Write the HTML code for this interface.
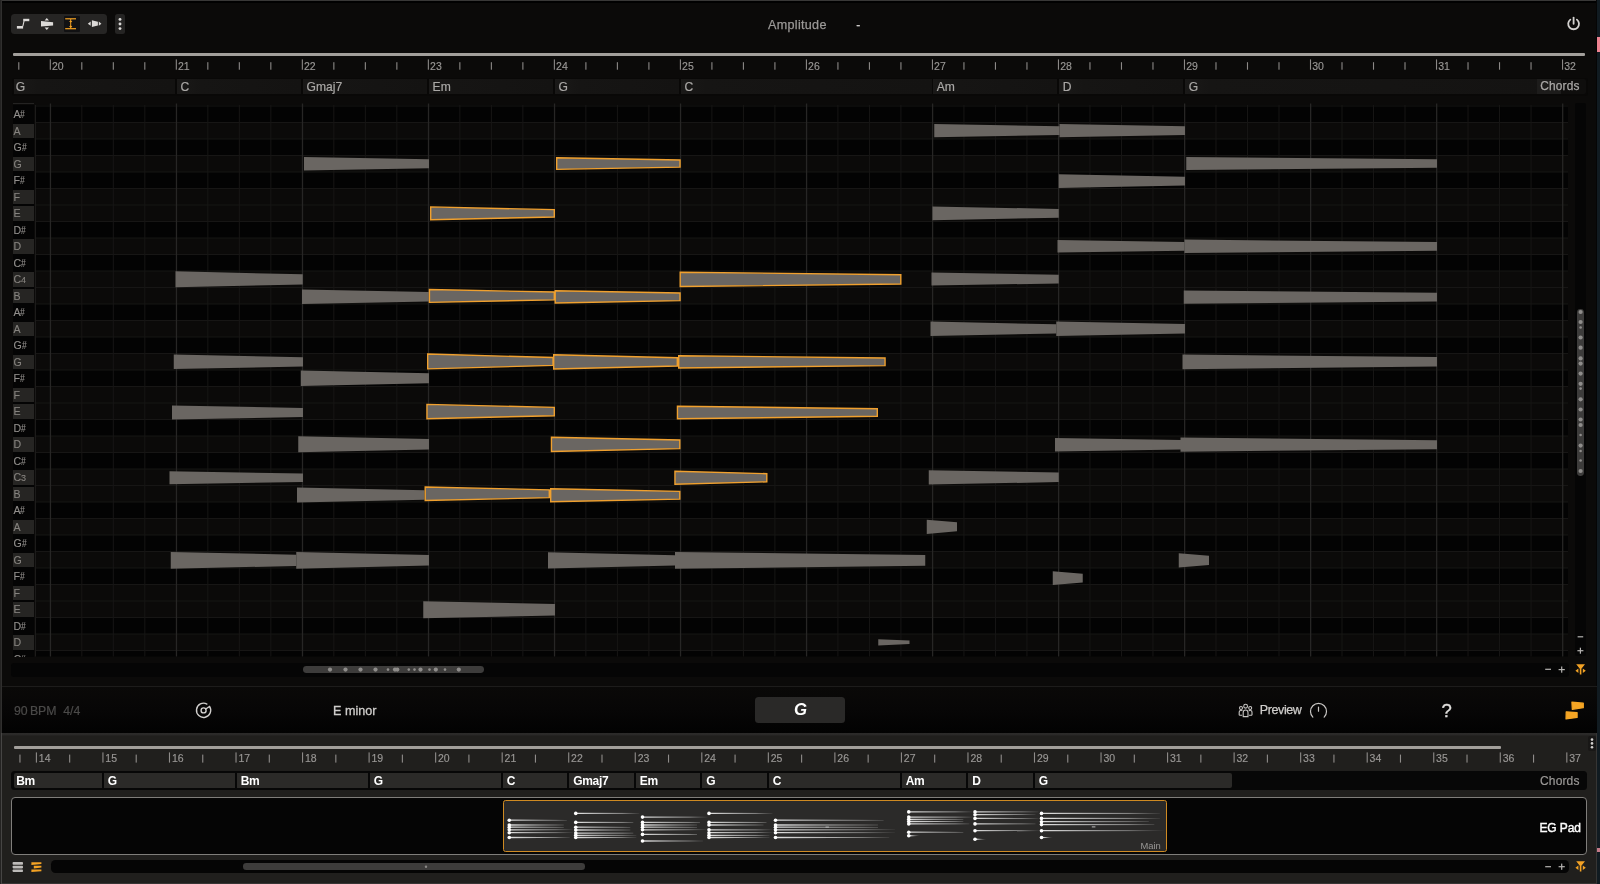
<!DOCTYPE html>
<html lang="en"><head><meta charset="utf-8"><title>Piano roll</title>
<style>
html,body{margin:0;padding:0;background:#0b0a09;}
body{width:1600px;height:884px;overflow:hidden;position:relative;font-family:"Liberation Sans",sans-serif;color:#aaa;-webkit-font-smoothing:antialiased;}
.a{position:absolute;}
.t{position:absolute;white-space:nowrap;line-height:1;}
.key{position:absolute;left:12.5px;width:21px;height:14.5px;background:#262523;}
.kl{position:absolute;left:13.5px;font-size:10.6px;line-height:1;color:#86837f;white-space:nowrap;letter-spacing:-0.2px;-webkit-text-stroke:0.12px;}
.kl i{font-style:normal;display:inline-block;transform:scaleX(.8);transform-origin:0 50%;}
.kl b{font-weight:normal;font-size:9px;}
.rl{position:absolute;font-size:10.5px;line-height:1;color:#999795;white-space:nowrap;-webkit-text-stroke:0.15px #999795;}
.cl{position:absolute;font-size:12.1px;line-height:1;color:#aaa8a6;white-space:nowrap;top:81px;-webkit-text-stroke:0.2px #aaa8a6;}
.bcl{position:absolute;font-size:12px;line-height:1;color:#fff;white-space:nowrap;top:775px;font-weight:bold;letter-spacing:-0.3px;}
svg{position:absolute;left:0;top:0;overflow:visible;}
</style></head><body><div id="root" style="position:absolute;left:0;top:0;width:1600px;height:884px;will-change:transform">

<div class="a" style="left:0;top:0;width:1597px;height:2.7px;background:#010101"></div><div class="a" style="left:0;top:0;width:1597px;height:1.3px;background:#393837"></div>
<div class="a" style="left:0;top:0;width:1.2px;height:884px;background:#242322"></div><div class="a" style="left:1.2px;top:0;width:1px;height:733px;background:#302f2e"></div><div class="a" style="left:1.2px;top:733px;width:1px;height:151px;background:#464544;z-index:3"></div>
<div class="a" style="left:1596.5px;top:0;width:3.5px;height:884px;background:#111b21"></div>
<div class="a" style="left:1597px;top:37px;width:3px;height:15px;background:#ee8391"></div>
<div class="a" style="left:1596px;top:0;width:1px;height:884px;background:#050505"></div>
<div class="a" style="left:11px;top:14px;width:95.5px;height:20px;background:#262524;border-radius:3.5px"></div>
<div class="a" style="left:63.8px;top:15.8px;width:16.2px;height:16px;background:#111113;border-radius:1px"></div>
<div class="a" style="left:115px;top:14px;width:10px;height:20px;background:#252423;border-radius:2.5px"></div>
<svg width="140" height="40" viewBox="0 0 140 40">
<g fill="#dcdad8" stroke="none">
<!-- step icon -->
<rect x="16.9" y="26" width="6.2" height="2.6"/><rect x="23.2" y="18.8" width="6.1" height="2.4"/><path d="M22.3 26.2l1.2-5.2h1.1l-1.2 5.2z"/>
<!-- vertical resize blob -->
<path d="M41 20.9L53.1 22.2V25.4L41 26.4z"/>
<path d="M46.8 17.9l2.2 2.6h-4.4zM46.8 30.1l2.2-2.6h-4.4z"/>
<!-- horizontal resize blob -->
<path d="M91.9 20.3L97.9 21.8V25.5L91.9 27.1z"/>
<path d="M87.8 23.7l2.9-2.1v4.2zM101.4 23.7l-2.6-2.1v4.2z"/>

<!-- dots -->
<circle cx="120" cy="19.4" r="1.45"/><circle cx="120" cy="24" r="1.45"/><circle cx="120" cy="28.6" r="1.45"/>
</g>
<g fill="#f3a224" stroke="none">
<rect x="65.2" y="18.2" width="10.8" height="1.2"/>
<rect x="65.2" y="28.1" width="10.8" height="1.2"/>
<rect x="70.2" y="19" width="1" height="9.5"/>
<path d="M70.7 20.4l1.6 1.1-1.6 1.100-1.600-1.100zM70.700 25.500l1.600 1.100-1.600 1.100-1.600-1.100z"/>
</g>
</svg>
<div class="t" id="amp" style="left:768px;top:19.1px;font-size:12.6px;color:#9b9997;letter-spacing:0.3px;-webkit-text-stroke:0.25px #9b9997">Amplitude</div>
<div class="t" id="dash" style="left:856.2px;top:18.8px;font-size:12px;color:#d8d6d4;-webkit-text-stroke:0.2px #d8d6d4">-</div>
<svg width="1600" height="50" viewBox="0 0 1600 50"><g fill="none" stroke="#d2d0ce" stroke-width="1.8" stroke-linecap="round">
<path d="M1570.3 19.6a5.4 5.4 0 1 0 6.6 0"/><path d="M1573.6 17.6v6.2"/></g></svg>
<div class="a" style="left:13.3px;top:53.4px;width:1572px;height:2.9px;background:#a29f9b;border-radius:1px"></div>
<svg width="1600" height="80" viewBox="0 0 1600 80"><g fill="#8c8987"><rect x="18.24" y="62.2" width="1.1" height="7.5"/><rect x="49.75" y="59.4" width="1.1" height="10.3"/><rect x="81.25" y="62.2" width="1.1" height="7.5"/><rect x="112.76" y="62.2" width="1.1" height="7.5"/><rect x="144.26" y="62.2" width="1.1" height="7.5"/><rect x="175.77" y="59.4" width="1.1" height="10.3"/><rect x="207.27" y="62.2" width="1.1" height="7.5"/><rect x="238.78" y="62.2" width="1.1" height="7.5"/><rect x="270.28" y="62.2" width="1.1" height="7.5"/><rect x="301.79" y="59.4" width="1.1" height="10.3"/><rect x="333.30" y="62.2" width="1.1" height="7.5"/><rect x="364.80" y="62.2" width="1.1" height="7.5"/><rect x="396.31" y="62.2" width="1.1" height="7.5"/><rect x="427.81" y="59.4" width="1.1" height="10.3"/><rect x="459.31" y="62.2" width="1.1" height="7.5"/><rect x="490.82" y="62.2" width="1.1" height="7.5"/><rect x="522.33" y="62.2" width="1.1" height="7.5"/><rect x="553.83" y="59.4" width="1.1" height="10.3"/><rect x="585.34" y="62.2" width="1.1" height="7.5"/><rect x="616.84" y="62.2" width="1.1" height="7.5"/><rect x="648.35" y="62.2" width="1.1" height="7.5"/><rect x="679.85" y="59.4" width="1.1" height="10.3"/><rect x="711.36" y="62.2" width="1.1" height="7.5"/><rect x="742.86" y="62.2" width="1.1" height="7.5"/><rect x="774.37" y="62.2" width="1.1" height="7.5"/><rect x="805.87" y="59.4" width="1.1" height="10.3"/><rect x="837.38" y="62.2" width="1.1" height="7.5"/><rect x="868.88" y="62.2" width="1.1" height="7.5"/><rect x="900.38" y="62.2" width="1.1" height="7.5"/><rect x="931.89" y="59.4" width="1.1" height="10.3"/><rect x="963.39" y="62.2" width="1.1" height="7.5"/><rect x="994.90" y="62.2" width="1.1" height="7.5"/><rect x="1026.40" y="62.2" width="1.1" height="7.5"/><rect x="1057.91" y="59.4" width="1.1" height="10.3"/><rect x="1089.41" y="62.2" width="1.1" height="7.5"/><rect x="1120.92" y="62.2" width="1.1" height="7.5"/><rect x="1152.42" y="62.2" width="1.1" height="7.5"/><rect x="1183.93" y="59.4" width="1.1" height="10.3"/><rect x="1215.43" y="62.2" width="1.1" height="7.5"/><rect x="1246.94" y="62.2" width="1.1" height="7.5"/><rect x="1278.44" y="62.2" width="1.1" height="7.5"/><rect x="1309.95" y="59.4" width="1.1" height="10.3"/><rect x="1341.45" y="62.2" width="1.1" height="7.5"/><rect x="1372.96" y="62.2" width="1.1" height="7.5"/><rect x="1404.46" y="62.2" width="1.1" height="7.5"/><rect x="1435.97" y="59.4" width="1.1" height="10.3"/><rect x="1467.47" y="62.2" width="1.1" height="7.5"/><rect x="1498.98" y="62.2" width="1.1" height="7.5"/><rect x="1530.48" y="62.2" width="1.1" height="7.5"/><rect x="1561.99" y="59.4" width="1.1" height="10.3"/></g></svg>
<div class="rl" style="left:52.0px;top:60.6px">20</div>
<div class="rl" style="left:178.0px;top:60.6px">21</div>
<div class="rl" style="left:304.0px;top:60.6px">22</div>
<div class="rl" style="left:430.1px;top:60.6px">23</div>
<div class="rl" style="left:556.1px;top:60.6px">24</div>
<div class="rl" style="left:682.1px;top:60.6px">25</div>
<div class="rl" style="left:808.1px;top:60.6px">26</div>
<div class="rl" style="left:934.1px;top:60.6px">27</div>
<div class="rl" style="left:1060.2px;top:60.6px">28</div>
<div class="rl" style="left:1186.2px;top:60.6px">29</div>
<div class="rl" style="left:1312.2px;top:60.6px">30</div>
<div class="rl" style="left:1438.2px;top:60.6px">31</div>
<div class="rl" style="left:1564.2px;top:60.6px">32</div>
<div class="a" style="left:11.5px;top:77.5px;width:1576px;height:18px;background:#090807;border-radius:3px"></div>
<div class="a" style="left:13.9px;top:79px;width:161.4px;height:15px;background:linear-gradient(90deg,#1a1918 0,#161514 24px,#141312 100%)"></div>
<div class="cl" style="left:15.7px">G</div>
<div class="a" style="left:176.9px;top:79px;width:124.5px;height:15px;background:linear-gradient(90deg,#1a1918 0,#161514 24px,#141312 100%)"></div>
<div class="cl" style="left:180.5px">C</div>
<div class="a" style="left:303.0px;top:79px;width:124.4px;height:15px;background:linear-gradient(90deg,#1a1918 0,#161514 24px,#141312 100%)"></div>
<div class="cl" style="left:306.6px">Gmaj7</div>
<div class="a" style="left:429.0px;top:79px;width:124.4px;height:15px;background:linear-gradient(90deg,#1a1918 0,#161514 24px,#141312 100%)"></div>
<div class="cl" style="left:432.6px">Em</div>
<div class="a" style="left:555.0px;top:79px;width:124.4px;height:15px;background:linear-gradient(90deg,#1a1918 0,#161514 24px,#141312 100%)"></div>
<div class="cl" style="left:558.6px">G</div>
<div class="a" style="left:681.0px;top:79px;width:250.5px;height:15px;background:linear-gradient(90deg,#1a1918 0,#161514 24px,#141312 100%)"></div>
<div class="cl" style="left:684.6px">C</div>
<div class="a" style="left:933.1px;top:79px;width:124.4px;height:15px;background:linear-gradient(90deg,#1a1918 0,#161514 24px,#141312 100%)"></div>
<div class="cl" style="left:936.7px">Am</div>
<div class="a" style="left:1059.1px;top:79px;width:124.4px;height:15px;background:linear-gradient(90deg,#1a1918 0,#161514 24px,#141312 100%)"></div>
<div class="cl" style="left:1062.7px">D</div>
<div class="a" style="left:1185.1px;top:79px;width:375.9px;height:15px;background:linear-gradient(90deg,#1a1918 0,#161514 24px,#141312 100%)"></div>
<div class="cl" style="left:1188.7px">G</div>
<div class="a" style="left:1537px;top:79px;width:49px;height:15px;background:#0f0e0d;border-radius:2px"></div>
<div class="a" style="left:1537px;top:79px;width:24px;height:15px;background:#1d1c1b"></div>
<div class="t" id="chT" style="left:1540.3px;top:81.1px;font-size:11.9px;color:#a9a7a5;letter-spacing:0.15px;-webkit-text-stroke:0.25px #a9a7a5">Chords</div>
<div class="a" style="left:12.5px;top:103px;width:21px;height:1.2px;background:#242322"></div>
<div class="a" id="keys" style="left:0;top:0;width:36px;height:657px;overflow:hidden">
<div class="a" style="left:12.5px;top:105px;width:21px;height:552px;background:#040404"></div>
<div class="kl" style="top:109.20px;color:#93908d">A<i>#</i></div>
<div class="key" style="top:123.50px"></div>
<div class="kl" style="top:125.70px;color:#86837f">A</div>
<div class="kl" style="top:142.20px;color:#93908d">G<i>#</i></div>
<div class="key" style="top:156.50px"></div>
<div class="kl" style="top:158.70px;color:#86837f">G</div>
<div class="kl" style="top:175.20px;color:#93908d">F<i>#</i></div>
<div class="key" style="top:189.50px"></div>
<div class="kl" style="top:191.70px;color:#86837f">F</div>
<div class="key" style="top:206.00px"></div>
<div class="kl" style="top:208.20px;color:#86837f">E</div>
<div class="kl" style="top:224.70px;color:#93908d">D<i>#</i></div>
<div class="key" style="top:239.00px"></div>
<div class="kl" style="top:241.20px;color:#86837f">D</div>
<div class="kl" style="top:257.70px;color:#93908d">C<i>#</i></div>
<div class="key" style="top:272.00px"></div>
<div class="kl" style="top:274.20px;color:#86837f">C<b>4</b></div>
<div class="key" style="top:288.50px"></div>
<div class="kl" style="top:290.70px;color:#86837f">B</div>
<div class="kl" style="top:307.20px;color:#93908d">A<i>#</i></div>
<div class="key" style="top:321.50px"></div>
<div class="kl" style="top:323.70px;color:#86837f">A</div>
<div class="kl" style="top:340.20px;color:#93908d">G<i>#</i></div>
<div class="key" style="top:354.50px"></div>
<div class="kl" style="top:356.70px;color:#86837f">G</div>
<div class="kl" style="top:373.20px;color:#93908d">F<i>#</i></div>
<div class="key" style="top:387.50px"></div>
<div class="kl" style="top:389.70px;color:#86837f">F</div>
<div class="key" style="top:404.00px"></div>
<div class="kl" style="top:406.20px;color:#86837f">E</div>
<div class="kl" style="top:422.70px;color:#93908d">D<i>#</i></div>
<div class="key" style="top:437.00px"></div>
<div class="kl" style="top:439.20px;color:#86837f">D</div>
<div class="kl" style="top:455.70px;color:#93908d">C<i>#</i></div>
<div class="key" style="top:470.00px"></div>
<div class="kl" style="top:472.20px;color:#86837f">C<b>3</b></div>
<div class="key" style="top:486.50px"></div>
<div class="kl" style="top:488.70px;color:#86837f">B</div>
<div class="kl" style="top:505.20px;color:#93908d">A<i>#</i></div>
<div class="key" style="top:519.50px"></div>
<div class="kl" style="top:521.70px;color:#86837f">A</div>
<div class="kl" style="top:538.20px;color:#93908d">G<i>#</i></div>
<div class="key" style="top:552.50px"></div>
<div class="kl" style="top:554.70px;color:#86837f">G</div>
<div class="kl" style="top:571.20px;color:#93908d">F<i>#</i></div>
<div class="key" style="top:585.50px"></div>
<div class="kl" style="top:587.70px;color:#86837f">F</div>
<div class="key" style="top:602.00px"></div>
<div class="kl" style="top:604.20px;color:#86837f">E</div>
<div class="kl" style="top:620.70px;color:#93908d">D<i>#</i></div>
<div class="key" style="top:635.00px"></div>
<div class="kl" style="top:637.20px;color:#86837f">D</div>
<div class="kl" style="top:653.70px;color:#93908d">C<i>#</i></div>
</div>
<svg width="1600" height="884" viewBox="0 0 1600 884" shape-rendering="auto"><rect x="35.5" y="105.0" width="1532.5" height="551.5" fill="#030303"/><rect x="35.5" y="122.50" width="1532.5" height="16.50" fill="#0b0a09"/><rect x="35.5" y="155.50" width="1532.5" height="16.50" fill="#0b0a09"/><rect x="35.5" y="188.50" width="1532.5" height="16.50" fill="#0b0a09"/><rect x="35.5" y="205.00" width="1532.5" height="16.50" fill="#0b0a09"/><rect x="35.5" y="238.00" width="1532.5" height="16.50" fill="#0b0a09"/><rect x="35.5" y="271.00" width="1532.5" height="16.50" fill="#0b0a09"/><rect x="35.5" y="287.50" width="1532.5" height="16.50" fill="#0b0a09"/><rect x="35.5" y="320.50" width="1532.5" height="16.50" fill="#0b0a09"/><rect x="35.5" y="353.50" width="1532.5" height="16.50" fill="#0b0a09"/><rect x="35.5" y="386.50" width="1532.5" height="16.50" fill="#0b0a09"/><rect x="35.5" y="403.00" width="1532.5" height="16.50" fill="#0b0a09"/><rect x="35.5" y="436.00" width="1532.5" height="16.50" fill="#0b0a09"/><rect x="35.5" y="469.00" width="1532.5" height="16.50" fill="#0b0a09"/><rect x="35.5" y="485.50" width="1532.5" height="16.50" fill="#0b0a09"/><rect x="35.5" y="518.50" width="1532.5" height="16.50" fill="#0b0a09"/><rect x="35.5" y="551.50" width="1532.5" height="16.50" fill="#0b0a09"/><rect x="35.5" y="584.50" width="1532.5" height="16.50" fill="#0b0a09"/><rect x="35.5" y="601.00" width="1532.5" height="16.50" fill="#0b0a09"/><rect x="35.5" y="634.00" width="1532.5" height="16.50" fill="#0b0a09"/><rect x="35.5" y="105.50" width="1532.5" height="1" fill="#171615"/><rect x="35.5" y="122.00" width="1532.5" height="1" fill="#171615"/><rect x="35.5" y="138.50" width="1532.5" height="1" fill="#171615"/><rect x="35.5" y="155.00" width="1532.5" height="1" fill="#171615"/><rect x="35.5" y="171.50" width="1532.5" height="1" fill="#171615"/><rect x="35.5" y="188.00" width="1532.5" height="1" fill="#171615"/><rect x="35.5" y="204.50" width="1532.5" height="1" fill="#171615"/><rect x="35.5" y="221.00" width="1532.5" height="1" fill="#171615"/><rect x="35.5" y="237.50" width="1532.5" height="1" fill="#171615"/><rect x="35.5" y="254.00" width="1532.5" height="1" fill="#171615"/><rect x="35.5" y="270.50" width="1532.5" height="1" fill="#171615"/><rect x="35.5" y="287.00" width="1532.5" height="1" fill="#171615"/><rect x="35.5" y="303.50" width="1532.5" height="1" fill="#171615"/><rect x="35.5" y="320.00" width="1532.5" height="1" fill="#171615"/><rect x="35.5" y="336.50" width="1532.5" height="1" fill="#171615"/><rect x="35.5" y="353.00" width="1532.5" height="1" fill="#171615"/><rect x="35.5" y="369.50" width="1532.5" height="1" fill="#171615"/><rect x="35.5" y="386.00" width="1532.5" height="1" fill="#171615"/><rect x="35.5" y="402.50" width="1532.5" height="1" fill="#171615"/><rect x="35.5" y="419.00" width="1532.5" height="1" fill="#171615"/><rect x="35.5" y="435.50" width="1532.5" height="1" fill="#171615"/><rect x="35.5" y="452.00" width="1532.5" height="1" fill="#171615"/><rect x="35.5" y="468.50" width="1532.5" height="1" fill="#171615"/><rect x="35.5" y="485.00" width="1532.5" height="1" fill="#171615"/><rect x="35.5" y="501.50" width="1532.5" height="1" fill="#171615"/><rect x="35.5" y="518.00" width="1532.5" height="1" fill="#171615"/><rect x="35.5" y="534.50" width="1532.5" height="1" fill="#171615"/><rect x="35.5" y="551.00" width="1532.5" height="1" fill="#171615"/><rect x="35.5" y="567.50" width="1532.5" height="1" fill="#171615"/><rect x="35.5" y="584.00" width="1532.5" height="1" fill="#171615"/><rect x="35.5" y="600.50" width="1532.5" height="1" fill="#171615"/><rect x="35.5" y="617.00" width="1532.5" height="1" fill="#171615"/><rect x="35.5" y="633.50" width="1532.5" height="1" fill="#171615"/><rect x="35.5" y="650.00" width="1532.5" height="1" fill="#171615"/><rect x="49.80" y="103.5" width="1.3" height="553.0" fill="#272625"/><rect x="81.30" y="105.0" width="1" height="551.5" fill="#171615"/><rect x="112.81" y="105.0" width="1" height="551.5" fill="#171615"/><rect x="144.31" y="105.0" width="1" height="551.5" fill="#171615"/><rect x="175.82" y="103.5" width="1.3" height="553.0" fill="#272625"/><rect x="207.32" y="105.0" width="1" height="551.5" fill="#171615"/><rect x="238.83" y="105.0" width="1" height="551.5" fill="#171615"/><rect x="270.33" y="105.0" width="1" height="551.5" fill="#171615"/><rect x="301.84" y="103.5" width="1.3" height="553.0" fill="#272625"/><rect x="333.35" y="105.0" width="1" height="551.5" fill="#171615"/><rect x="364.85" y="105.0" width="1" height="551.5" fill="#171615"/><rect x="396.36" y="105.0" width="1" height="551.5" fill="#171615"/><rect x="427.86" y="103.5" width="1.3" height="553.0" fill="#272625"/><rect x="459.37" y="105.0" width="1" height="551.5" fill="#171615"/><rect x="490.87" y="105.0" width="1" height="551.5" fill="#171615"/><rect x="522.38" y="105.0" width="1" height="551.5" fill="#171615"/><rect x="553.88" y="103.5" width="1.3" height="553.0" fill="#272625"/><rect x="585.38" y="105.0" width="1" height="551.5" fill="#171615"/><rect x="616.89" y="105.0" width="1" height="551.5" fill="#171615"/><rect x="648.39" y="105.0" width="1" height="551.5" fill="#171615"/><rect x="679.90" y="103.5" width="1.3" height="553.0" fill="#272625"/><rect x="711.40" y="105.0" width="1" height="551.5" fill="#171615"/><rect x="742.91" y="105.0" width="1" height="551.5" fill="#171615"/><rect x="774.41" y="105.0" width="1" height="551.5" fill="#171615"/><rect x="805.92" y="103.5" width="1.3" height="553.0" fill="#272625"/><rect x="837.42" y="105.0" width="1" height="551.5" fill="#171615"/><rect x="868.93" y="105.0" width="1" height="551.5" fill="#171615"/><rect x="900.43" y="105.0" width="1" height="551.5" fill="#171615"/><rect x="931.94" y="103.5" width="1.3" height="553.0" fill="#272625"/><rect x="963.44" y="105.0" width="1" height="551.5" fill="#171615"/><rect x="994.95" y="105.0" width="1" height="551.5" fill="#171615"/><rect x="1026.45" y="105.0" width="1" height="551.5" fill="#171615"/><rect x="1057.96" y="103.5" width="1.3" height="553.0" fill="#272625"/><rect x="1089.46" y="105.0" width="1" height="551.5" fill="#171615"/><rect x="1120.97" y="105.0" width="1" height="551.5" fill="#171615"/><rect x="1152.47" y="105.0" width="1" height="551.5" fill="#171615"/><rect x="1183.98" y="103.5" width="1.3" height="553.0" fill="#272625"/><rect x="1215.48" y="105.0" width="1" height="551.5" fill="#171615"/><rect x="1246.99" y="105.0" width="1" height="551.5" fill="#171615"/><rect x="1278.49" y="105.0" width="1" height="551.5" fill="#171615"/><rect x="1310.00" y="103.5" width="1.3" height="553.0" fill="#272625"/><rect x="1341.50" y="105.0" width="1" height="551.5" fill="#171615"/><rect x="1373.01" y="105.0" width="1" height="551.5" fill="#171615"/><rect x="1404.51" y="105.0" width="1" height="551.5" fill="#171615"/><rect x="1436.02" y="103.5" width="1.3" height="553.0" fill="#272625"/><rect x="1467.52" y="105.0" width="1" height="551.5" fill="#171615"/><rect x="1499.03" y="105.0" width="1" height="551.5" fill="#171615"/><rect x="1530.53" y="105.0" width="1" height="551.5" fill="#171615"/><rect x="1562.04" y="103.5" width="1.3" height="553.0" fill="#272625"/><rect x="35.0" y="105.0" width="1" height="551.5" fill="#1c1b1a"/></svg>
<svg width="1600" height="884" viewBox="0 0 1600 884"><g fill="#6a6662"><path d="M934.25 123.92L1059.50 126.17L1059.50 134.92L934.25 137.17Z"/><path d="M1059.50 123.92L1185.00 126.17L1185.00 134.92L1059.50 137.17Z"/><path d="M304.00 157.10L429.00 159.35L429.00 168.35L304.00 170.60Z"/><path d="M1186.25 157.05L1437.00 159.30L1437.00 167.80L1186.25 170.05Z"/><path d="M1058.75 174.22L1185.00 176.72L1185.00 185.47L1058.75 187.97Z"/><path d="M932.50 206.47L1058.75 208.97L1058.75 217.72L932.50 220.22Z"/><path d="M1057.50 240.10L1184.50 241.97L1184.50 250.72L1057.50 252.60Z"/><path d="M1184.50 239.60L1437.00 241.97L1437.00 250.72L1184.50 253.10Z"/><path d="M175.50 271.35L302.75 274.23L302.75 284.48L175.50 287.35Z"/><path d="M931.50 272.55L1058.75 274.68L1058.75 283.43L931.50 285.55Z"/><path d="M302.00 289.50L428.75 292.12L428.75 301.38L302.00 304.00Z"/><path d="M1183.75 290.53L1437.00 292.78L1437.00 301.53L1183.75 303.78Z"/><path d="M930.50 321.60L1056.25 324.23L1056.25 333.48L930.50 336.10Z"/><path d="M1056.25 321.60L1185.00 324.10L1185.00 333.60L1056.25 336.10Z"/><path d="M173.75 354.60L303.00 357.23L303.00 366.48L173.75 369.10Z"/><path d="M1182.50 354.48L1437.00 357.10L1437.00 366.60L1182.50 369.23Z"/><path d="M300.75 370.60L429.00 373.35L429.00 383.35L300.75 386.10Z"/><path d="M172.00 405.50L303.00 408.00L303.00 417.00L172.00 419.50Z"/><path d="M298.25 436.35L429.00 439.10L429.00 449.60L298.25 452.35Z"/><path d="M1055.00 438.00L1181.25 440.00L1181.25 449.50L1055.00 451.50Z"/><path d="M1180.50 437.53L1437.00 440.15L1437.00 449.15L1180.50 451.78Z"/><path d="M169.50 471.25L303.00 473.62L303.00 481.88L169.50 484.25Z"/><path d="M928.75 470.23L1058.75 472.60L1058.75 482.10L928.75 484.48Z"/><path d="M297.00 487.50L424.50 490.25L424.50 499.75L297.00 502.50Z"/><path d="M926.75 519.73L957.00 522.35L957.00 531.35L926.75 533.98Z"/><path d="M170.75 551.98L296.25 554.73L296.25 565.98L170.75 568.73Z"/><path d="M296.25 551.98L429.00 555.10L429.00 565.60L296.25 568.73Z"/><path d="M548.00 552.23L675.00 555.23L675.00 565.48L548.00 568.48Z"/><path d="M675.00 551.98L925.25 554.98L925.25 565.73L675.00 568.73Z"/><path d="M1178.75 553.23L1209.00 555.73L1209.00 564.98L1178.75 567.48Z"/><path d="M1052.75 571.23L1082.75 573.73L1082.75 582.48L1052.75 584.98Z"/><path d="M423.25 601.25L555.00 604.00L555.00 615.50L423.25 618.25Z"/><path d="M878.25 639.23L909.50 640.60L909.50 644.10L878.25 645.48Z"/></g><g fill="#6a6662" stroke="#f0a02e" stroke-width="1.4" stroke-linejoin="miter"><path d="M556.70 157.75L680.05 160.00L680.05 167.10L556.70 169.35Z"/><path d="M430.70 206.92L554.30 209.67L554.30 217.03L430.70 219.78Z"/><path d="M680.20 272.18L900.80 274.68L900.80 284.03L680.20 286.53Z"/><path d="M429.45 289.53L554.30 292.03L554.30 299.88L429.45 302.38Z"/><path d="M555.20 290.68L680.05 293.05L680.05 300.65L555.20 303.03Z"/><path d="M427.70 354.03L553.05 357.53L553.05 365.38L427.70 368.88Z"/><path d="M553.70 354.68L677.30 357.68L677.30 366.03L553.70 369.03Z"/><path d="M678.70 355.68L885.05 358.05L885.05 365.65L678.70 368.03Z"/><path d="M426.95 404.38L554.30 407.38L554.30 415.73L426.95 418.73Z"/><path d="M677.45 406.20L877.30 408.70L877.30 416.30L677.45 418.80Z"/><path d="M551.45 437.18L679.80 440.05L679.80 448.65L551.45 451.53Z"/><path d="M674.95 471.20L766.80 473.70L766.80 481.80L674.95 484.30Z"/><path d="M425.20 486.95L549.30 489.82L549.30 497.68L425.20 500.55Z"/><path d="M550.70 488.70L679.80 491.32L679.80 499.18L550.70 501.80Z"/></g></svg>
<div class="a" style="left:1574.5px;top:103px;width:11.5px;height:553px;background:#050505;border-radius:2px"></div>
<div class="a" style="left:1577.3px;top:308.5px;width:6.7px;height:167px;background:#3d3c3b;border-radius:3.4px"></div>
<svg width="1600" height="884" viewBox="0 0 1600 884"><g fill="#8f8d8b"><circle cx="1580.6" cy="312.0" r="2.1"/><circle cx="1580.6" cy="322.0" r="2.1"/><circle cx="1580.6" cy="327.5" r="1.3"/><circle cx="1580.6" cy="337.5" r="2.1"/><circle cx="1580.6" cy="347.7" r="2.1"/><circle cx="1580.6" cy="358.4" r="2.1"/><circle cx="1580.6" cy="363.6" r="2.1"/><circle cx="1580.6" cy="373.6" r="2.1"/><circle cx="1580.6" cy="383.8" r="2.1"/><circle cx="1580.6" cy="388.6" r="1.3"/><circle cx="1580.6" cy="399.3" r="2.1"/><circle cx="1580.6" cy="409.5" r="2.1"/><circle cx="1580.6" cy="419.5" r="2.1"/><circle cx="1580.6" cy="425.0" r="2.1"/><circle cx="1580.6" cy="435.0" r="1.3"/><circle cx="1580.6" cy="445.6" r="2.1"/><circle cx="1580.6" cy="451.0" r="1.3"/><circle cx="1580.6" cy="460.5" r="1.3"/><circle cx="1580.6" cy="471.0" r="2.1"/></g></svg>
<div class="a" style="left:10.5px;top:662.5px;width:1558px;height:14px;background:#050505;border-radius:3px"></div>
<svg width="1600" height="884" viewBox="0 0 1600 884"><g fill="#b5b3b1"><rect x="1577.6" y="636.2" width="5.6" height="1.2"/><rect x="1577.4" y="650.1" width="6" height="1.2"/><rect x="1579.8" y="647.7" width="1.2" height="6"/><rect x="1545.2" y="668.7" width="5.8" height="1.2"/><rect x="1558.6" y="669" width="6.2" height="1.2"/><rect x="1561.1" y="666.5" width="1.2" height="6.2"/></g><g fill="#f3a224"><path d="M1576.2 664.2h8.8l-3.6 4.6v5.6h-1.6v-5.6z"/><path d="M1575.4 670.8l3-2.3v4.6zM1585.8 670.8l-3-2.3v4.6z"/></g></svg>
<div class="a" style="left:303px;top:666.2px;width:181px;height:6.8px;background:#3d3c3b;border-radius:3.4px"></div>
<svg width="1600" height="884" viewBox="0 0 1600 884"><g fill="#8f8d8b"><circle cx="330.0" cy="669.6" r="2.1"/><circle cx="345.5" cy="669.6" r="2.1"/><circle cx="360.5" cy="669.6" r="2.1"/><circle cx="375.5" cy="669.6" r="2.1"/><circle cx="388.0" cy="669.6" r="1.3"/><circle cx="395.0" cy="669.6" r="2.1"/><circle cx="397.3" cy="669.6" r="2.1"/><circle cx="408.8" cy="669.6" r="1.3"/><circle cx="414.5" cy="669.6" r="1.3"/><circle cx="420.5" cy="669.6" r="2.1"/><circle cx="429.5" cy="669.6" r="1.3"/><circle cx="435.8" cy="669.6" r="2.1"/><circle cx="445.0" cy="669.6" r="1.3"/><circle cx="458.8" cy="669.6" r="2.1"/></g></svg>
<div class="a" style="left:2px;top:686px;width:1594.5px;height:47px;background:linear-gradient(180deg,#0a0908 0,#070606 50%,#020202 100%)"></div>
<div class="a" style="left:2px;top:686px;width:1594.5px;height:1px;background:#1d1c1b"></div>
<div class="t" id="bpm" style="left:14px;top:704.6px;font-size:12.3px;color:#4b4a49;word-spacing:-1.2px;-webkit-text-stroke:0.2px #4b4a49"><span id="bpm1">90 BPM</span><span id="bpm2" style="margin-left:6.6px">4/4</span></div>
<svg width="1600" height="884" viewBox="0 0 1600 884"><g fill="none" stroke="#d2d0ce" stroke-width="1.4" stroke-linecap="round">
<path d="M206.93 704.03A7.1 7.1 0 1 0 209.55 706.43L205.7 709"/><circle cx="203.6" cy="710.4" r="2.5"/></g></svg>
<div class="t" id="emin" style="left:333px;top:705.2px;font-size:12.6px;color:#cfcdcb;letter-spacing:0px;-webkit-text-stroke:0.3px #cfcdcb">E minor</div>
<div class="a" style="left:754.7px;top:697.2px;width:90.6px;height:26.3px;background:#2a2928;border-radius:3.5px"></div>
<div class="t" id="gbtn" style="left:794px;top:702.3px;font-size:16.800px;color:#fff;font-style:italic;font-weight:bold">G</div>
<svg width="1600" height="884" viewBox="0 0 1600 884"><g fill="none" stroke="#c8c6c4" stroke-width="1.1">
<circle cx="1245.6" cy="706.2" r="1.9"/><circle cx="1241" cy="708" r="1.5"/><circle cx="1250.2" cy="708" r="1.5"/>
<path d="M1243.2 716.6v-4.2a2.4 2.4 0 0 1 4.8 0v4.2z"/>
<path d="M1239.2 715.2v-3a1.8 1.8 0 0 1 3.2-1.2M1252 715.2v-3a1.8 1.8 0 0 0-3.2-1.2M1239.2 715.2h3M1252 715.2h-3"/>
</g>
<g fill="none" stroke="#c8c6c4" stroke-width="1.2" stroke-linecap="round"><path d="M1312.84 717.06A8 8 0 1 1 1324.16 717.06"/><path d="M1318.5 707v4.2"/></g>
</svg>
<div class="t" id="prev" style="left:1259.8px;top:704.2px;font-size:12.5px;color:#cfcdcb;letter-spacing:-0.4px;-webkit-text-stroke:0.25px #cfcdcb">Preview</div>
<div class="t" id="qm" style="left:1441.6px;top:702px;font-size:18.5px;color:#e2e0de;-webkit-text-stroke:0.3px #e2e0de">?</div>
<svg width="1600" height="884" viewBox="0 0 1600 884"><g fill="#f5a524" stroke="#f5a524" stroke-width="1.2" stroke-linejoin="round">
<path d="M1571.9 702.2L1583.3 703.2V707.700L1572.300 709.300z"/>
<path d="M1566.200 711.800L1577.100 712.600V717.400L1566 718.900z"/>
</g></svg>
<div class="a" style="left:2px;top:733px;width:1594.5px;height:151px;background:#201f1d"></div>
<div class="a" style="left:2px;top:733px;width:1594.5px;height:2.5px;background:linear-gradient(180deg,#2c2b2a,#2a2928 60%,#201f1d)"></div>
<div class="a" style="left:2px;top:882.6px;width:1594.5px;height:1.4px;background:#363534"></div>
<div class="a" style="left:1595.6px;top:733px;width:1px;height:151px;background:#363534"></div>
<div class="a" style="left:1597.4px;top:848px;width:2.6px;height:4px;background:#c47a88"></div>
<div class="a" style="left:13.5px;top:746px;width:1487px;height:2.9px;background:#a29f9b;border-radius:1px"></div>
<div class="a" style="left:1588px;top:736px;width:8px;height:15px;background:#181716;border-radius:2px"></div>
<svg width="1600" height="884" viewBox="0 0 1600 884"><g fill="#d0cecc"><circle cx="1592" cy="739.6" r="1.3"/><circle cx="1592" cy="743.4" r="1.3"/><circle cx="1592" cy="747.2" r="1.3"/></g></svg>
<div class="rl" style="left:38.8px;top:752.9px;color:#999795">14</div>
<div class="rl" style="left:105.3px;top:752.9px;color:#999795">15</div>
<div class="rl" style="left:171.9px;top:752.9px;color:#999795">16</div>
<div class="rl" style="left:238.4px;top:752.9px;color:#999795">17</div>
<div class="rl" style="left:305.0px;top:752.9px;color:#999795">18</div>
<div class="rl" style="left:371.5px;top:752.9px;color:#999795">19</div>
<div class="rl" style="left:438.0px;top:752.9px;color:#999795">20</div>
<div class="rl" style="left:504.6px;top:752.9px;color:#999795">21</div>
<div class="rl" style="left:571.1px;top:752.9px;color:#999795">22</div>
<div class="rl" style="left:637.7px;top:752.9px;color:#999795">23</div>
<div class="rl" style="left:704.2px;top:752.9px;color:#999795">24</div>
<div class="rl" style="left:770.7px;top:752.9px;color:#999795">25</div>
<div class="rl" style="left:837.3px;top:752.9px;color:#999795">26</div>
<div class="rl" style="left:903.8px;top:752.9px;color:#999795">27</div>
<div class="rl" style="left:970.4px;top:752.9px;color:#999795">28</div>
<div class="rl" style="left:1036.9px;top:752.9px;color:#999795">29</div>
<div class="rl" style="left:1103.4px;top:752.9px;color:#999795">30</div>
<div class="rl" style="left:1170.0px;top:752.9px;color:#999795">31</div>
<div class="rl" style="left:1236.5px;top:752.9px;color:#999795">32</div>
<div class="rl" style="left:1303.1px;top:752.9px;color:#999795">33</div>
<div class="rl" style="left:1369.6px;top:752.9px;color:#999795">34</div>
<div class="rl" style="left:1436.1px;top:752.9px;color:#999795">35</div>
<div class="rl" style="left:1502.7px;top:752.9px;color:#999795">36</div>
<div class="rl" style="left:1569.2px;top:752.9px;color:#999795">37</div>
<svg width="1600" height="884" viewBox="0 0 1600 884"><g fill="#8f8c8a"><rect x="19.4" y="754.6" width="1.1" height="8"/><rect x="35.85" y="752.4" width="1.1" height="10.2"/><rect x="69.12" y="754.6" width="1.1" height="8"/><rect x="102.39" y="752.4" width="1.1" height="10.2"/><rect x="135.66" y="754.6" width="1.1" height="8"/><rect x="168.93" y="752.4" width="1.1" height="10.2"/><rect x="202.20" y="754.6" width="1.1" height="8"/><rect x="235.47" y="752.4" width="1.1" height="10.2"/><rect x="268.74" y="754.6" width="1.1" height="8"/><rect x="302.01" y="752.4" width="1.1" height="10.2"/><rect x="335.28" y="754.6" width="1.1" height="8"/><rect x="368.55" y="752.4" width="1.1" height="10.2"/><rect x="401.82" y="754.6" width="1.1" height="8"/><rect x="435.09" y="752.4" width="1.1" height="10.2"/><rect x="468.36" y="754.6" width="1.1" height="8"/><rect x="501.63" y="752.4" width="1.1" height="10.2"/><rect x="534.90" y="754.6" width="1.1" height="8"/><rect x="568.17" y="752.4" width="1.1" height="10.2"/><rect x="601.44" y="754.6" width="1.1" height="8"/><rect x="634.71" y="752.4" width="1.1" height="10.2"/><rect x="667.98" y="754.6" width="1.1" height="8"/><rect x="701.25" y="752.4" width="1.1" height="10.2"/><rect x="734.52" y="754.6" width="1.1" height="8"/><rect x="767.79" y="752.4" width="1.1" height="10.2"/><rect x="801.06" y="754.6" width="1.1" height="8"/><rect x="834.33" y="752.4" width="1.1" height="10.2"/><rect x="867.60" y="754.6" width="1.1" height="8"/><rect x="900.87" y="752.4" width="1.1" height="10.2"/><rect x="934.14" y="754.6" width="1.1" height="8"/><rect x="967.41" y="752.4" width="1.1" height="10.2"/><rect x="1000.68" y="754.6" width="1.1" height="8"/><rect x="1033.95" y="752.4" width="1.1" height="10.2"/><rect x="1067.22" y="754.6" width="1.1" height="8"/><rect x="1100.49" y="752.4" width="1.1" height="10.2"/><rect x="1133.76" y="754.6" width="1.1" height="8"/><rect x="1167.03" y="752.4" width="1.1" height="10.2"/><rect x="1200.30" y="754.6" width="1.1" height="8"/><rect x="1233.57" y="752.4" width="1.1" height="10.2"/><rect x="1266.84" y="754.6" width="1.1" height="8"/><rect x="1300.11" y="752.4" width="1.1" height="10.2"/><rect x="1333.38" y="754.6" width="1.1" height="8"/><rect x="1366.65" y="752.4" width="1.1" height="10.2"/><rect x="1399.92" y="754.6" width="1.1" height="8"/><rect x="1433.19" y="752.4" width="1.1" height="10.2"/><rect x="1466.46" y="754.6" width="1.1" height="8"/><rect x="1499.73" y="752.4" width="1.1" height="10.2"/><rect x="1533.00" y="754.6" width="1.1" height="8"/><rect x="1566.27" y="752.4" width="1.1" height="10.2"/></g></svg>
<div class="a" style="left:11.3px;top:771px;width:1576px;height:19px;background:#070707;border-radius:3.5px"></div>
<div class="a" style="left:13.6px;top:773.4px;width:88.2px;height:14.6px;background:#2b2a28;border-radius:2px 0 0 2px;"></div>
<div class="bcl" style="left:16.2px">Bm</div>
<div class="a" style="left:103.6px;top:773.4px;width:131.2px;height:14.6px;background:#2b2a28;"></div>
<div class="bcl" style="left:107.7px">G</div>
<div class="a" style="left:236.6px;top:773.4px;width:131.2px;height:14.6px;background:#2b2a28;"></div>
<div class="bcl" style="left:240.7px">Bm</div>
<div class="a" style="left:369.6px;top:773.4px;width:131.2px;height:14.6px;background:#2b2a28;"></div>
<div class="bcl" style="left:373.7px">G</div>
<div class="a" style="left:502.6px;top:773.4px;width:64.7px;height:14.6px;background:#2b2a28;"></div>
<div class="bcl" style="left:506.7px">C</div>
<div class="a" style="left:569.1px;top:773.4px;width:64.7px;height:14.6px;background:#2b2a28;"></div>
<div class="bcl" style="left:573.2px">Gmaj7</div>
<div class="a" style="left:635.6px;top:773.4px;width:64.7px;height:14.6px;background:#2b2a28;"></div>
<div class="bcl" style="left:639.7px">Em</div>
<div class="a" style="left:702.1px;top:773.4px;width:64.7px;height:14.6px;background:#2b2a28;"></div>
<div class="bcl" style="left:706.2px">G</div>
<div class="a" style="left:768.6px;top:773.4px;width:131.2px;height:14.6px;background:#2b2a28;"></div>
<div class="bcl" style="left:772.7px">C</div>
<div class="a" style="left:901.6px;top:773.4px;width:64.7px;height:14.6px;background:#2b2a28;"></div>
<div class="bcl" style="left:905.7px">Am</div>
<div class="a" style="left:968.1px;top:773.4px;width:64.7px;height:14.6px;background:#2b2a28;"></div>
<div class="bcl" style="left:972.2px">D</div>
<div class="a" style="left:1034.6px;top:773.4px;width:197.9px;height:14.6px;background:#2b2a28;border-radius:0 2px 2px 0;"></div>
<div class="bcl" style="left:1038.7px">G</div>
<div class="t" id="chB" style="left:1540px;top:774.6px;font-size:12px;color:#9a9896;letter-spacing:0.15px;-webkit-text-stroke:0.2px #9a9896">Chords</div>
<div class="a" style="left:11.3px;top:797px;width:1575.5px;height:57.5px;background:#050505;border:1.4px solid #807e7b;border-radius:4px;box-sizing:border-box"></div>
<div class="t" id="egp" style="left:1539.4px;top:821.5px;font-size:12px;color:#fff;letter-spacing:-0.1px;-webkit-text-stroke:0.4px #fff">EG Pad</div>
<div class="a" style="left:502.7px;top:800.3px;width:664px;height:52px;background:#2b2a29;border:1.7px solid #cf8a22;border-radius:2.5px;box-sizing:border-box"></div>
<div class="t" id="main" style="left:1140.4px;top:841.3px;font-size:9.4px;color:#989694">Main</div>
<svg width="1600" height="884" viewBox="0 0 1600 884"><defs><linearGradient id="lg0" gradientUnits="userSpaceOnUse" x1="509.2" y1="0" x2="575.8" y2="0"><stop offset="0" stop-color="#fff" stop-opacity="0.85"/><stop offset="0.7" stop-color="#fff" stop-opacity="0.5"/><stop offset="1" stop-color="#fff" stop-opacity="0"/></linearGradient><linearGradient id="sg0" gradientUnits="userSpaceOnUse" x1="509.2" y1="0" x2="521.2" y2="0"><stop offset="0" stop-color="#fff" stop-opacity="0.95"/><stop offset="1" stop-color="#fff" stop-opacity="0"/></linearGradient><linearGradient id="lg1" gradientUnits="userSpaceOnUse" x1="575.8" y1="0" x2="642.2" y2="0"><stop offset="0" stop-color="#fff" stop-opacity="0.85"/><stop offset="0.7" stop-color="#fff" stop-opacity="0.5"/><stop offset="1" stop-color="#fff" stop-opacity="0"/></linearGradient><linearGradient id="sg1" gradientUnits="userSpaceOnUse" x1="575.8" y1="0" x2="587.8" y2="0"><stop offset="0" stop-color="#fff" stop-opacity="0.95"/><stop offset="1" stop-color="#fff" stop-opacity="0"/></linearGradient><linearGradient id="lg2" gradientUnits="userSpaceOnUse" x1="642.5" y1="0" x2="709.0" y2="0"><stop offset="0" stop-color="#fff" stop-opacity="0.85"/><stop offset="0.7" stop-color="#fff" stop-opacity="0.5"/><stop offset="1" stop-color="#fff" stop-opacity="0"/></linearGradient><linearGradient id="sg2" gradientUnits="userSpaceOnUse" x1="642.5" y1="0" x2="654.5" y2="0"><stop offset="0" stop-color="#fff" stop-opacity="0.95"/><stop offset="1" stop-color="#fff" stop-opacity="0"/></linearGradient><linearGradient id="lg3" gradientUnits="userSpaceOnUse" x1="709.0" y1="0" x2="775.5" y2="0"><stop offset="0" stop-color="#fff" stop-opacity="0.85"/><stop offset="0.7" stop-color="#fff" stop-opacity="0.5"/><stop offset="1" stop-color="#fff" stop-opacity="0"/></linearGradient><linearGradient id="sg3" gradientUnits="userSpaceOnUse" x1="709.0" y1="0" x2="721.0" y2="0"><stop offset="0" stop-color="#fff" stop-opacity="0.95"/><stop offset="1" stop-color="#fff" stop-opacity="0"/></linearGradient><linearGradient id="lg4" gradientUnits="userSpaceOnUse" x1="775.5" y1="0" x2="900.5" y2="0"><stop offset="0" stop-color="#fff" stop-opacity="0.85"/><stop offset="0.7" stop-color="#fff" stop-opacity="0.5"/><stop offset="1" stop-color="#fff" stop-opacity="0"/></linearGradient><linearGradient id="sg4" gradientUnits="userSpaceOnUse" x1="775.5" y1="0" x2="787.5" y2="0"><stop offset="0" stop-color="#fff" stop-opacity="0.95"/><stop offset="1" stop-color="#fff" stop-opacity="0"/></linearGradient><linearGradient id="lg5" gradientUnits="userSpaceOnUse" x1="908.8" y1="0" x2="975.2" y2="0"><stop offset="0" stop-color="#fff" stop-opacity="0.85"/><stop offset="0.7" stop-color="#fff" stop-opacity="0.5"/><stop offset="1" stop-color="#fff" stop-opacity="0"/></linearGradient><linearGradient id="sg5" gradientUnits="userSpaceOnUse" x1="908.8" y1="0" x2="920.8" y2="0"><stop offset="0" stop-color="#fff" stop-opacity="0.95"/><stop offset="1" stop-color="#fff" stop-opacity="0"/></linearGradient><linearGradient id="lg6" gradientUnits="userSpaceOnUse" x1="975.0" y1="0" x2="1041.5" y2="0"><stop offset="0" stop-color="#fff" stop-opacity="0.85"/><stop offset="0.7" stop-color="#fff" stop-opacity="0.5"/><stop offset="1" stop-color="#fff" stop-opacity="0"/></linearGradient><linearGradient id="sg6" gradientUnits="userSpaceOnUse" x1="975.0" y1="0" x2="987.0" y2="0"><stop offset="0" stop-color="#fff" stop-opacity="0.95"/><stop offset="1" stop-color="#fff" stop-opacity="0"/></linearGradient><linearGradient id="lg7" gradientUnits="userSpaceOnUse" x1="1041.5" y1="0" x2="1165.5" y2="0"><stop offset="0" stop-color="#fff" stop-opacity="0.85"/><stop offset="0.7" stop-color="#fff" stop-opacity="0.5"/><stop offset="1" stop-color="#fff" stop-opacity="0"/></linearGradient><linearGradient id="sg7" gradientUnits="userSpaceOnUse" x1="1041.5" y1="0" x2="1053.5" y2="0"><stop offset="0" stop-color="#fff" stop-opacity="0.95"/><stop offset="1" stop-color="#fff" stop-opacity="0"/></linearGradient></defs><path d="M509.2 819.55L566.8 819.90L566.8 820.50L509.2 820.85Z" fill="url(#lg0)"/><circle cx="509.25" cy="820.20" r="1.8" fill="#fff"/><path d="M509.2 824.35L563.8 824.70L563.8 825.30L509.2 825.65Z" fill="url(#lg0)"/><circle cx="509.25" cy="825.00" r="1.8" fill="#fff"/><path d="M509.2 826.55L563.8 826.90L563.8 827.50L509.2 827.85Z" fill="url(#lg0)"/><circle cx="509.25" cy="827.20" r="1.8" fill="#fff"/><path d="M509.2 829.15L572.8 829.50L572.8 830.10L509.2 830.45Z" fill="url(#lg0)"/><circle cx="509.25" cy="829.80" r="1.8" fill="#fff"/><path d="M509.2 832.05L572.8 832.40L572.8 833.00L509.2 833.35Z" fill="url(#lg0)"/><circle cx="509.25" cy="832.70" r="1.8" fill="#fff"/><path d="M509.2 836.85L569.8 837.20L569.8 837.80L509.2 838.15Z" fill="url(#lg0)"/><circle cx="509.25" cy="837.50" r="1.8" fill="#fff"/><path d="M575.8 812.75L639.3 813.10L639.3 813.70L575.8 814.05Z" fill="url(#lg1)"/><circle cx="575.75" cy="813.40" r="1.8" fill="#fff"/><path d="M575.8 821.75L633.3 822.10L633.3 822.70L575.8 823.05Z" fill="url(#lg1)"/><circle cx="575.75" cy="822.40" r="1.8" fill="#fff"/><path d="M575.8 826.55L630.3 826.90L630.3 827.50L575.8 827.85Z" fill="url(#lg1)"/><circle cx="575.75" cy="827.20" r="1.8" fill="#fff"/><path d="M575.8 829.35L630.3 829.70L630.3 830.30L575.8 830.65Z" fill="url(#lg1)"/><circle cx="575.75" cy="830.00" r="1.8" fill="#fff"/><path d="M575.8 832.45L633.3 832.80L633.3 833.40L575.8 833.75Z" fill="url(#lg1)"/><circle cx="575.75" cy="833.10" r="1.8" fill="#fff"/><path d="M575.8 834.65L636.3 835.00L636.3 835.60L575.8 835.95Z" fill="url(#lg1)"/><circle cx="575.75" cy="835.30" r="1.8" fill="#fff"/><path d="M575.8 836.85L636.3 837.20L636.3 837.80L575.8 838.15Z" fill="url(#lg1)"/><circle cx="575.75" cy="837.50" r="1.8" fill="#fff"/><path d="M642.5 816.45L709.0 816.80L709.0 817.40L642.5 817.75Z" fill="url(#lg2)"/><circle cx="642.50" cy="817.10" r="1.8" fill="#fff"/><path d="M642.5 821.75L700.0 822.10L700.0 822.70L642.5 823.05Z" fill="url(#lg2)"/><circle cx="642.50" cy="822.40" r="1.8" fill="#fff"/><path d="M642.5 824.35L697.0 824.70L697.0 825.30L642.5 825.65Z" fill="url(#lg2)"/><circle cx="642.50" cy="825.00" r="1.8" fill="#fff"/><path d="M642.5 826.55L697.0 826.90L697.0 827.50L642.5 827.85Z" fill="url(#lg2)"/><circle cx="642.50" cy="827.20" r="1.8" fill="#fff"/><path d="M642.5 829.15L706.0 829.50L706.0 830.10L642.5 830.45Z" fill="url(#lg2)"/><circle cx="642.50" cy="829.80" r="1.8" fill="#fff"/><path d="M642.5 833.75L697.0 834.10L697.0 834.70L642.5 835.05Z" fill="url(#lg2)"/><circle cx="642.50" cy="834.40" r="1.8" fill="#fff"/><path d="M642.5 840.35L703.0 840.70L703.0 841.30L642.5 841.65Z" fill="url(#lg2)"/><circle cx="642.50" cy="841.00" r="1.8" fill="#fff"/><path d="M709.0 812.75L772.5 813.10L772.5 813.70L709.0 814.05Z" fill="url(#lg3)"/><circle cx="709.00" cy="813.40" r="1.8" fill="#fff"/><path d="M709.0 821.75L766.5 822.10L766.5 822.70L709.0 823.05Z" fill="url(#lg3)"/><circle cx="709.00" cy="822.40" r="1.8" fill="#fff"/><path d="M709.0 824.35L763.5 824.70L763.5 825.30L709.0 825.65Z" fill="url(#lg3)"/><circle cx="709.00" cy="825.00" r="1.8" fill="#fff"/><path d="M709.0 829.15L772.5 829.50L772.5 830.10L709.0 830.45Z" fill="url(#lg3)"/><circle cx="709.00" cy="829.80" r="1.8" fill="#fff"/><path d="M709.0 832.05L772.5 832.40L772.5 833.00L709.0 833.35Z" fill="url(#lg3)"/><circle cx="709.00" cy="832.70" r="1.8" fill="#fff"/><path d="M709.0 834.65L769.5 835.00L769.5 835.60L709.0 835.95Z" fill="url(#lg3)"/><circle cx="709.00" cy="835.30" r="1.8" fill="#fff"/><path d="M709.0 836.85L769.5 837.20L769.5 837.80L709.0 838.15Z" fill="url(#lg3)"/><circle cx="709.00" cy="837.50" r="1.8" fill="#fff"/><path d="M775.5 819.55L883.6 819.90L883.6 820.50L775.5 820.85Z" fill="url(#lg4)"/><circle cx="775.50" cy="820.20" r="1.8" fill="#fff"/><path d="M775.5 824.35L878.0 824.70L878.0 825.30L775.5 825.65Z" fill="url(#lg4)"/><circle cx="775.50" cy="825.00" r="1.8" fill="#fff"/><path d="M775.5 826.55L878.0 826.90L878.0 827.50L775.5 827.85Z" fill="url(#lg4)"/><circle cx="775.50" cy="827.20" r="1.8" fill="#fff"/><path d="M775.5 829.15L894.9 829.50L894.9 830.10L775.5 830.45Z" fill="url(#lg4)"/><circle cx="775.50" cy="829.80" r="1.8" fill="#fff"/><path d="M775.5 832.05L894.9 832.40L894.9 833.00L775.5 833.35Z" fill="url(#lg4)"/><circle cx="775.50" cy="832.70" r="1.8" fill="#fff"/><path d="M775.5 836.85L889.2 837.20L889.2 837.80L775.5 838.15Z" fill="url(#lg4)"/><circle cx="775.50" cy="837.50" r="1.8" fill="#fff"/><path d="M908.8 811.25L972.3 811.60L972.3 812.20L908.8 812.55Z" fill="url(#lg5)"/><circle cx="908.75" cy="811.90" r="1.8" fill="#fff"/><path d="M908.8 816.45L975.2 816.80L975.2 817.40L908.8 817.75Z" fill="url(#lg5)"/><circle cx="908.75" cy="817.10" r="1.8" fill="#fff"/><path d="M908.8 818.65L963.3 819.00L963.3 819.60L908.8 819.95Z" fill="url(#lg5)"/><circle cx="908.75" cy="819.30" r="1.8" fill="#fff"/><path d="M908.8 820.85L963.3 821.20L963.3 821.80L908.8 822.15Z" fill="url(#lg5)"/><circle cx="908.75" cy="821.50" r="1.8" fill="#fff"/><path d="M908.8 823.25L969.3 823.60L969.3 824.20L908.8 824.55Z" fill="url(#lg5)"/><circle cx="908.75" cy="823.90" r="1.8" fill="#fff"/><path d="M908.8 831.55L963.3 831.90L963.3 832.50L908.8 832.85Z" fill="url(#lg5)"/><circle cx="908.75" cy="832.20" r="1.8" fill="#fff"/><path d="M908.8 834.95L920.8 835.70L908.8 836.45Z" fill="url(#sg5)"/><circle cx="908.75" cy="835.70" r="1.8" fill="#fff"/><path d="M975.0 811.25L1038.5 811.60L1038.5 812.20L975.0 812.55Z" fill="url(#lg6)"/><circle cx="975.00" cy="811.90" r="1.8" fill="#fff"/><path d="M975.0 814.05L1035.5 814.40L1035.5 815.00L975.0 815.35Z" fill="url(#lg6)"/><circle cx="975.00" cy="814.70" r="1.8" fill="#fff"/><path d="M975.0 817.75L1038.5 818.10L1038.5 818.70L975.0 819.05Z" fill="url(#lg6)"/><circle cx="975.00" cy="818.40" r="1.8" fill="#fff"/><path d="M975.0 823.25L1035.5 823.60L1035.5 824.20L975.0 824.55Z" fill="url(#lg6)"/><circle cx="975.00" cy="823.90" r="1.8" fill="#fff"/><path d="M975.0 830.05L1041.5 830.40L1041.5 831.00L975.0 831.35Z" fill="url(#lg6)"/><circle cx="975.00" cy="830.70" r="1.8" fill="#fff"/><path d="M975.0 838.45L987.0 839.20L975.0 839.95Z" fill="url(#sg6)"/><circle cx="975.00" cy="839.20" r="1.8" fill="#fff"/><path d="M1041.5 812.75L1159.9 813.10L1159.9 813.70L1041.5 814.05Z" fill="url(#lg7)"/><circle cx="1041.50" cy="813.40" r="1.8" fill="#fff"/><path d="M1041.5 817.75L1159.9 818.10L1159.9 818.70L1041.5 819.05Z" fill="url(#lg7)"/><circle cx="1041.50" cy="818.40" r="1.8" fill="#fff"/><path d="M1041.5 821.05L1148.8 821.40L1148.8 822.00L1041.5 822.35Z" fill="url(#lg7)"/><circle cx="1041.50" cy="821.70" r="1.8" fill="#fff"/><path d="M1041.5 823.95L1154.3 824.30L1154.3 824.90L1041.5 825.25Z" fill="url(#lg7)"/><circle cx="1041.50" cy="824.60" r="1.8" fill="#fff"/><path d="M1041.5 830.05L1165.5 830.40L1165.5 831.00L1041.5 831.35Z" fill="url(#lg7)"/><circle cx="1041.50" cy="830.70" r="1.8" fill="#fff"/><path d="M1041.5 836.75L1053.5 837.50L1041.5 838.25Z" fill="url(#sg7)"/><circle cx="1041.50" cy="837.50" r="1.8" fill="#fff"/><rect x="825.5" y="826.6" width="3.4" height="1" fill="#bbb"/><rect x="1091.8" y="826.4" width="3.6" height="1" fill="#bbb"/></svg>
<div class="a" style="left:50.5px;top:859.8px;width:1518px;height:13.6px;background:#050505;border-radius:4.5px"></div>
<div class="a" style="left:243px;top:863.4px;width:342px;height:6.6px;background:#3d3c3b;border-radius:3.3px"></div>
<svg width="1600" height="884" viewBox="0 0 1600 884">
<circle cx="426" cy="866.7" r="1.2" fill="#8a8886"/>
<g fill="#bdbbb9"><rect x="12.6" y="862" width="10.4" height="2.7" rx=".8"/><rect x="12.6" y="865.7" width="10.4" height="2.7" rx=".8"/><rect x="12.6" y="869.4" width="10.4" height="2.7" rx=".8"/></g>
<g fill="#f3a224"><path d="M31.400 862.200h10v1.800l-10 .9z"/><path d="M33.800 865.800h7.600v1.800l-7.600.9z"/><path d="M31.400 869.400h10v1.800l-10 .9z"/></g>
<g fill="#b5b3b1"><rect x="1545.200" y="866.100" width="5.800" height="1.200"/><rect x="1558.600" y="866.100" width="6.200" height="1.200"/><rect x="1561.100" y="863.600" width="1.200" height="6.200"/></g>
<g fill="#f3a224"><path d="M1576.200 861.200h8.800l-3.600 4.600v5.600h-1.600v-5.600z"/><path d="M1575.400 867.800l3-2.300v4.600zM1585.800 867.800l-3-2.300v4.600z"/></g>
</svg>
</div></body></html>
